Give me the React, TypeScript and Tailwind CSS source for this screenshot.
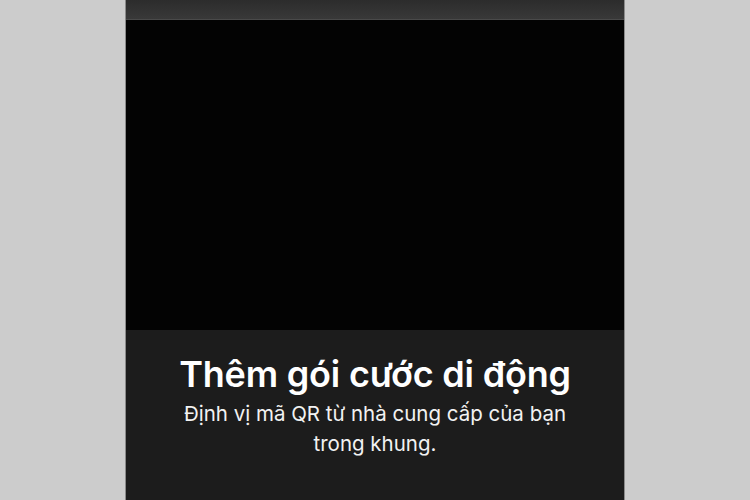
export default function App() {
  return (
    <div className="w-[750px] h-[500px] bg-[#cccccc] flex justify-center overflow-hidden">
      <div className="w-[500px] h-full flex flex-col border-x border-[#8a8a8a]">
        {/* Top bar */}
        <div className="h-[20px] bg-gradient-to-b from-[#2c2c2c] to-[#393939] border-b border-[#4a4a4a]" />

        {/* Camera viewfinder */}
        <div className="h-[310px] bg-[#030303]" />

        {/* Bottom sheet */}
        <div className="flex-1 bg-[#1c1c1c] flex flex-col items-center pt-[24px] font-['Inter','Noto_Sans',sans-serif] text-white text-center">
          <h1 className="text-[36px] font-semibold leading-[40px] tracking-[-0.2px]">
            Thêm gói cước di động
          </h1>
          <p className="mt-[5px] w-[410px] text-[20.5px] leading-[30px] text-[#f2f2f2]">
            Định vị mã QR từ nhà cung cấp của bạn trong khung.
          </p>
        </div>
      </div>
    </div>
  )
}
